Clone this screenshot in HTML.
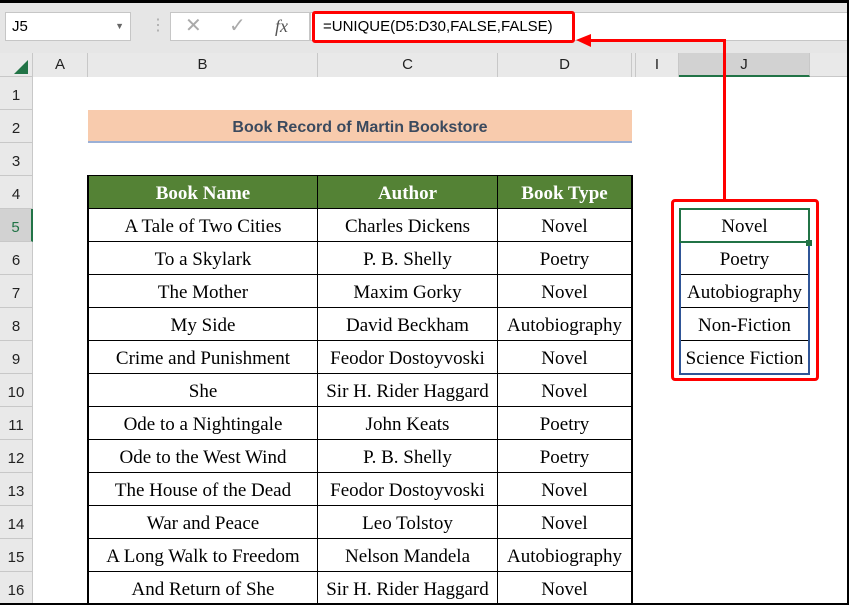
<!DOCTYPE html><html><head><style>
html,body{margin:0;width:849px;height:605px;overflow:hidden}
body{background:#fff;position:relative;font-family:"Liberation Serif",serif}
.a{position:absolute;box-sizing:border-box}
.hdr{font-family:"Liberation Sans",sans-serif;font-size:15px;color:#222;text-align:center;line-height:24px;top:53px;height:24px;border-right:1px solid #c8c8c8;background:#e9e9e9}
.rn{font-family:"Liberation Sans",sans-serif;font-size:15px;color:#222;left:0;width:33px;height:33px;line-height:38px;text-align:center;border-bottom:1px solid #c8c8c8;background:#e9e9e9;border-right:1px solid #c8c8c8}
.c{font-size:19px;text-align:center;line-height:36px;height:33px;border-right:1px solid #000;border-bottom:1px solid #000;white-space:nowrap;overflow:hidden}
</style></head><body>
<div class="a" style="left:0;top:0;width:849px;height:3px;background:#000"></div>
<div class="a" style="left:0;top:3px;width:849px;height:50px;background:#e6e6e6"></div>
<div class="a" style="left:5px;top:12px;width:126px;height:29px;background:#fff;border:1px solid #c6c6c6;font-family:'Liberation Sans',sans-serif;font-size:15px;line-height:27px;padding-left:6px">J5<span style="position:absolute;right:6px;font-size:9px;color:#666">▼</span></div>
<div class="a" style="left:150px;top:16px;color:#aaa;font-size:16px;line-height:20px">⋮</div>
<div class="a" style="left:170px;top:12px;width:140px;height:29px;background:#fff;border:1px solid #c6c6c6;font-family:'Liberation Sans',sans-serif;font-size:20px;color:#aaa;line-height:27px"><span style="position:absolute;left:14px">✕</span><span style="position:absolute;left:58px">✓</span><span style="position:absolute;left:104px;color:#555;font-family:'Liberation Serif';font-style:italic;font-size:18px">fx</span></div>
<div class="a" style="left:310px;top:12px;width:539px;height:29px;background:#fff;border:1px solid #c6c6c6"></div>
<div class="a" style="left:312px;top:11px;width:263px;height:32px;border:3px solid #f00;border-radius:3px;font-family:'Liberation Sans',sans-serif;font-size:15px;line-height:26px;padding-left:8px">=UNIQUE(D5:D30,FALSE,FALSE)</div>
<div class="a" style="left:0;top:53px;width:849px;height:24px;background:#e9e9e9;border-bottom:1px solid #c8c8c8"></div>
<div class="a" style="left:0;top:53px;width:33px;height:24px;border-right:1px solid #c8c8c8"></div>
<div class="a" style="left:14px;top:60px;width:0;height:0;border-left:14px solid transparent;border-bottom:14px solid #217346"></div>
<div class="a hdr" style="left:33px;width:55px">A</div>
<div class="a hdr" style="left:88px;width:230px">B</div>
<div class="a hdr" style="left:318px;width:180px">C</div>
<div class="a hdr" style="left:498px;width:134px">D</div>
<div class="a hdr" style="left:632px;width:4px"></div>
<div class="a hdr" style="left:636px;width:43px">I</div>
<div class="a hdr" style="left:679px;width:131px;background:#d2d2d2;border-bottom:2px solid #217346">J</div>
<div class="a" style="left:0;top:77px;width:33px;height:528px;background:#e9e9e9;border-right:1px solid #c8c8c8"></div>
<div class="a rn" style="top:77px">1</div><div class="a rn" style="top:110px">2</div><div class="a rn" style="top:143px">3</div><div class="a rn" style="top:176px">4</div><div class="a rn" style="top:209px;background:#d2d2d2;color:#217346;border-right:2px solid #217346">5</div><div class="a rn" style="top:242px">6</div><div class="a rn" style="top:275px">7</div><div class="a rn" style="top:308px">8</div><div class="a rn" style="top:341px">9</div><div class="a rn" style="top:374px">10</div><div class="a rn" style="top:407px">11</div><div class="a rn" style="top:440px">12</div><div class="a rn" style="top:473px">13</div><div class="a rn" style="top:506px">14</div><div class="a rn" style="top:539px">15</div><div class="a rn" style="top:572px">16</div>
<div class="a" style="left:88px;top:110px;width:544px;height:33px;background:#f8cbad;border-bottom:2px solid #9bb0d6;font-family:'Liberation Sans',sans-serif;font-weight:bold;font-size:16px;color:#3b4a5e;text-align:center;line-height:35px">Book Record of Martin Bookstore</div>
<div class="a" style="left:87px;top:175px;width:546px;height:430px;border:2px solid #000;border-bottom:none"></div>
<div class="a" style="left:89px;top:177px;width:542px;height:32px;background:#548235"></div>
<div id="t"></div>
<script>
var rows=[["Book Name","Author","Book Type"],["A Tale of Two Cities","Charles Dickens","Novel"],["To a Skylark","P. B. Shelly","Poetry"],["The Mother","Maxim Gorky","Novel"],["My Side","David Beckham","Autobiography"],["Crime and Punishment","Feodor Dostoyvoski","Novel"],["She","Sir H. Rider Haggard","Novel"],["Ode to a Nightingale","John Keats","Poetry"],["Ode to the West Wind","P. B. Shelly","Poetry"],["The House of the Dead","Feodor Dostoyvoski","Novel"],["War and Peace","Leo Tolstoy","Novel"],["A Long Walk to Freedom","Nelson Mandela","Autobiography"],["And Return of She","Sir H. Rider Haggard","Novel"]];
var xs=[[89,229],[318,180],[498,133]],h="";
rows.forEach(function(r,i){var y=176+i*33;r.forEach(function(t,j){var s=i==0?"color:#fff;font-weight:bold;background:#548235;":"";h+='<div class="a c" style="'+s+'left:'+xs[j][0]+'px;top:'+y+'px;width:'+xs[j][1]+'px'+(j==2?';border-right:none':'')+'">'+t+'</div>';});});
var u=["Novel","Poetry","Autobiography","Non-Fiction","Science Fiction"];
u.forEach(function(t,i){h+='<div class="a c" style="left:679px;top:'+(209+i*33)+'px;width:131px;border-left:1px solid #000">'+t+'</div>';});
document.getElementById("t").innerHTML=h;
</script>
<div class="a" style="left:679px;top:208px;width:131px;height:167px;border:2px solid #2f5597;border-top:none"></div>
<div class="a" style="left:679px;top:208px;width:131px;height:35px;border:2px solid #217346"></div>
<div class="a" style="left:806px;top:240px;width:6px;height:6px;background:#217346"></div>
<div class="a" style="left:671px;top:199px;width:148px;height:182px;border:3px solid #f00;border-radius:4px"></div>
<div class="a" style="left:723px;top:39px;width:3px;height:161px;background:#f00"></div>
<div class="a" style="left:590px;top:39px;width:136px;height:3px;background:#f00"></div>
<div class="a" style="left:576px;top:34px;width:0;height:0;border-top:6px solid transparent;border-bottom:7px solid transparent;border-right:15px solid #f00"></div>
<div class="a" style="left:847px;top:0;width:2px;height:605px;background:#000"></div>
<div class="a" style="left:0;top:603px;width:849px;height:2px;background:#000"></div>
</body></html>
